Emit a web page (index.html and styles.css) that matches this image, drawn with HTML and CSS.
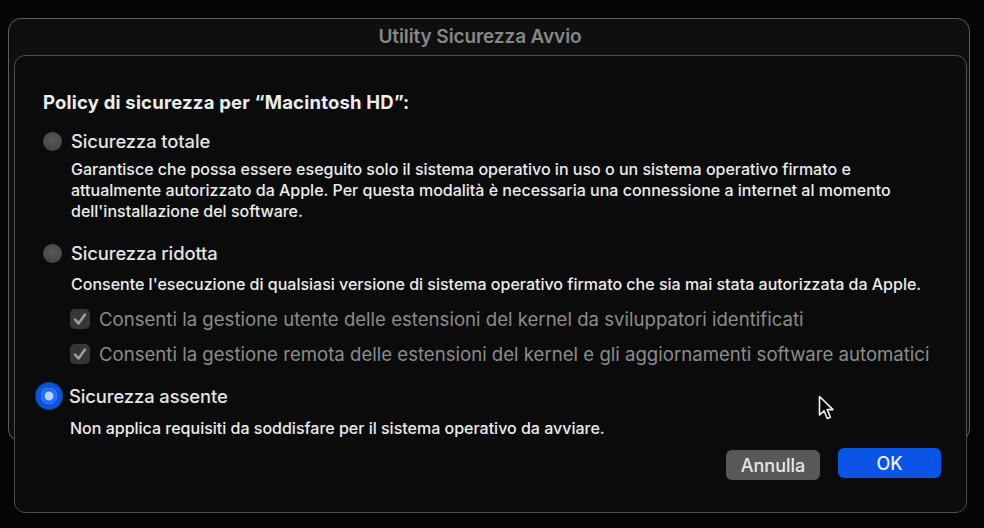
FILE: index.html
```html
<!DOCTYPE html>
<html lang="it">
<head>
<meta charset="utf-8">
<title>Utility Sicurezza Avvio</title>
<link rel="stylesheet" href="styles.css">
</head>
<body>
<div class="desktop">
  <div class="window">
    <div class="window-title">Utility Sicurezza Avvio</div>
  </div>
  <div class="sheet">
    <div class="heading">Policy di sicurezza per “Macintosh HD”:</div>

    <div class="option">
      <span class="radio"></span>
      <span class="option-label">Sicurezza totale</span>
    </div>
    <p class="desc desc-total">Garantisce che possa essere eseguito solo il sistema operativo in uso o un sistema operativo firmato e<br>attualmente autorizzato da Apple. Per questa modalità è necessaria una connessione a internet al momento<br>dell'installazione del software.</p>

    <div class="option option-reduced">
      <span class="radio"></span>
      <span class="option-label">Sicurezza ridotta</span>
    </div>
    <p class="desc desc-reduced">Consente l'esecuzione di qualsiasi versione di sistema operativo firmato che sia mai stata autorizzata da Apple.</p>
    <div class="check-row check-first">
      <span class="checkbox"><svg viewBox="0 0 20 20" width="20" height="20"><path d="M5 10.5 L8.5 14.5 L15 5.5" fill="none" stroke="#a2a2a2" stroke-width="2.4" stroke-linecap="round" stroke-linejoin="round"/></svg></span>
      <span class="check-label">Consenti la gestione utente delle estensioni del kernel da sviluppatori identificati</span>
    </div>
    <div class="check-row check-second">
      <span class="checkbox"><svg viewBox="0 0 20 20" width="20" height="20"><path d="M5 10.5 L8.5 14.5 L15 5.5" fill="none" stroke="#a2a2a2" stroke-width="2.4" stroke-linecap="round" stroke-linejoin="round"/></svg></span>
      <span class="check-label">Consenti la gestione remota delle estensioni del kernel e gli aggiornamenti software automatici</span>
    </div>

    <div class="option option-none">
      <span class="radio radio-on"><span class="radio-dot"></span></span>
      <span class="option-label label-on">Sicurezza assente</span>
    </div>
    <p class="desc desc-none">Non applica requisiti da soddisfare per il sistema operativo da avviare.</p>

    <div class="buttons">
      <button class="btn btn-cancel">Annulla</button>
      <button class="btn btn-ok">OK</button>
    </div>
  </div>
  <svg class="cursor" viewBox="0 0 18 28" width="18" height="28"><path d="M1.5 1.5 L1.5 20 L6 15.8 L9.3 23.5 L12.4 22.2 L9.2 14.6 L15 14.6 Z" fill="#000" stroke="#f2f2f2" stroke-width="1.6" stroke-linejoin="round"/></svg>
</div>
</body>
</html>
```

FILE: styles.css
```css
* { box-sizing: border-box; }

html, body {
  margin: 0;
  padding: 0;
  background: #050505;
}

body {
  font-family: Inter, "Noto Sans", "Liberation Sans", sans-serif;
  color: #e6e6e6;
}

.desktop {
  position: relative;
  width: 984px;
  height: 528px;
  overflow: hidden;
  padding: 18px 0 0 8px;
}

.window {
  width: 962px;
  height: 424px;
  border: 1.5px solid #5e5e5e;
  border-radius: 13px;
  background: #0f0f10;
  text-align: center;
}

.window-title {
  padding: 6px 18px 0 0;
  font-size: 19px;
  line-height: 24px;
  font-weight: 600;
  color: #878787;
  letter-spacing: -0.1px;
}

.sheet {
  position: absolute;
  left: 14px;
  top: 55px;
  width: 953px;
  height: 458px;
  border: 1.5px solid #4e4e4e;
  border-radius: 11px;
  background: #0b0b0b;
  padding: 34px 0 0 28px;
}

.heading {
  font-size: 18.5px;
  font-weight: 700;
  color: #ececec;
  line-height: 24px;
  letter-spacing: 0.2px;
}

.option {
  display: flex;
  align-items: center;
  gap: 9px;
  margin-top: 15px;
  height: 24px;
}

.option-reduced { margin-top: 19px; }
.option-none { margin-top: 19px; margin-left: -7px; gap: 7px; }

.radio {
  width: 19px;
  height: 19px;
  border-radius: 50%;
  background: radial-gradient(circle at 50% 40%, #5a5a5a, #3f3f3f);
  flex: none;
}

.radio-on {
  width: 26px;
  height: 26px;
  background: #0b56d8;
  box-shadow: 0 0 0 1px #0a3f9e;
  display: flex;
  align-items: center;
  justify-content: center;
}

.radio-dot {
  width: 16px;
  height: 16px;
  border-radius: 50%;
  background: #1c6cff;
  box-shadow: inset 0 0 0 3.5px #1c6cff, inset 0 0 0 9px #b9cff7;
}

.option-label {
  font-size: 18.4px;
  font-weight: 500;
  color: #e4e4e4;
  letter-spacing: -0.1px;
}

.desc {
  margin: 6px 0 0 28px;
  font-size: 16px;
  font-weight: 500;
  line-height: 21px;
  color: #ececec;
  letter-spacing: 0;
}

.desc-reduced { margin-top: 9px; }
.desc-none { margin-top: 10px; margin-left: 27px; }

.check-row {
  display: flex;
  align-items: center;
  gap: 9px;
  margin-left: 27px;
  height: 22px;
}

.check-first { margin-top: 13px; }
.check-second { margin-top: 13px; }

.checkbox {
  width: 20px;
  height: 20px;
  border-radius: 5px;
  background: #363636;
  flex: none;
  display: flex;
}

.check-label {
  font-size: 18.6px;
  color: #8c8c8c;
  letter-spacing: 0;
}

.buttons {
  display: flex;
  justify-content: flex-end;
  align-items: flex-start;
  gap: 18px;
  margin-top: 9px;
  padding-right: 25px;
}

.btn {
  font-family: inherit;
  font-size: 18px;
  font-weight: 500;
  border: none;
  border-radius: 6px;
  height: 30px;
  padding: 0;
  color: #f0f0f0;
}

.btn-cancel {
  width: 94px;
  background: #585858;
  margin-top: 2px;
  color: #e6e6e6;
}

.btn-ok {
  width: 103px;
  background: #0a55e6;
}

.cursor {
  position: absolute;
  left: 818px;
  top: 395px;
}
```
